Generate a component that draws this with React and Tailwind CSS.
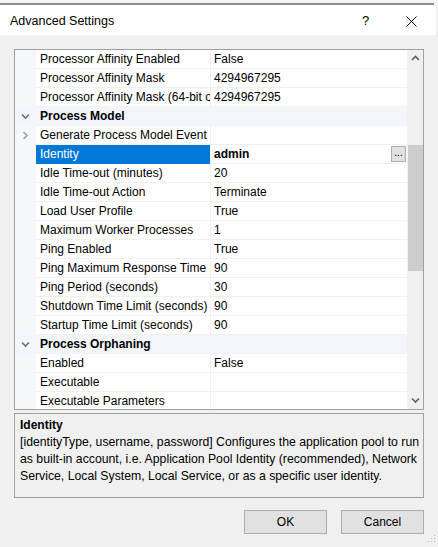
import React from "react";

const rows = [
  { name: "Processor Affinity Enabled", value: "False" },
  { name: "Processor Affinity Mask", value: "4294967295" },
  { name: "Processor Affinity Mask (64-bit option)", value: "4294967295" },
  { name: "Process Model", category: true },
  { name: "Generate Process Model Event Log Entry", value: "", expander: true },
  { name: "Identity", value: "admin", selected: true },
  { name: "Idle Time-out (minutes)", value: "20" },
  { name: "Idle Time-out Action", value: "Terminate" },
  { name: "Load User Profile", value: "True" },
  { name: "Maximum Worker Processes", value: "1" },
  { name: "Ping Enabled", value: "True" },
  { name: "Ping Maximum Response Time (seconds)", value: "90" },
  { name: "Ping Period (seconds)", value: "30" },
  { name: "Shutdown Time Limit (seconds)", value: "90" },
  { name: "Startup Time Limit (seconds)", value: "90" },
  { name: "Process Orphaning", category: true },
  { name: "Enabled", value: "False" },
  { name: "Executable", value: "" },
  { name: "Executable Parameters", value: "" },
];

const Chevron = ({ dir }) => {
  const d = dir === "down" ? "M1 2.5 L4.5 6 L8 2.5" : dir === "up" ? "M1 6 L4.5 2.5 L8 6" : "M2.5 1 L6 4.5 L2.5 8";
  return (
    <svg width="9" height="9" viewBox="0 0 9 9">
      <path d={d} fill="none" stroke="currentColor" strokeWidth="1.6" />
    </svg>
  );
};

const GridRow = ({ row }) => {
  if (row.category) {
    return (
      <div className="flex h-[19px] shrink-0 bg-[#f2f5fa]">
        <div className="w-[21px] flex items-center justify-center text-[#707070]">
          <Chevron dir="down" />
        </div>
        <div className="flex-1 pl-[4px] leading-[18px] font-bold border-b border-[#eef1f6]">{row.name}</div>
      </div>
    );
  }
  return (
    <div className="flex h-[19px] shrink-0">
      <div className="w-[21px] bg-[#f5f7fb] flex items-center justify-center text-[#a0a0a0]">
        {row.expander ? <Chevron dir="right" /> : null}
      </div>
      <div
        className={`w-[174px] pl-[4px] leading-[18px] whitespace-nowrap overflow-hidden border-b ${
          row.selected ? "bg-[#0078d7] text-white border-[#0078d7]" : "bg-white border-[#f0f0f0]"
        }`}
      >
        {row.name}
      </div>
      <div className="w-px bg-[#f0f0f0]" />
      <div className="flex-1 bg-white pl-[3px] leading-[18px] border-b border-[#f0f0f0] flex items-start">
        <span className={row.selected ? "font-bold flex-1" : "flex-1"}>{row.value}</span>
        {row.selected ? (
          <div className="w-[15px] h-[16px] mt-[1px] mr-[1px] border border-[#adadad] bg-[#e1e1e1] text-[10px] leading-[12px] text-center">
            ...
          </div>
        ) : null}
      </div>
    </div>
  );
};

export default function App() {
  return (
    <div className="w-[438px] h-[547px] bg-[#f0f0f0] font-['Segoe_UI','Liberation_Sans',sans-serif] text-[12px] text-black relative overflow-hidden">
      <div className="h-[3px] bg-[#f4f4f4]" />
      <div className="h-[2px] w-[434px] bg-[#8c8c8c]" />
      <div className="h-[30px] w-[436px] bg-white flex items-center pt-[2px]">
        <span className="pl-[10px] text-[12.5px] flex-1">Advanced Settings</span>
        <span className="w-[10px] text-[13px] mr-[34px]">?</span>
        <svg width="11" height="11" viewBox="0 0 11 11" className="mr-[19px]">
          <path d="M0.5 0.5 L10.5 10.5 M10.5 0.5 L0.5 10.5" stroke="#000" strokeWidth="1" />
        </svg>
      </div>
      <div className="px-[14px] pt-[14px]">
        <div className="w-[410px] h-[361px] border border-[#a0a0a0] flex bg-white overflow-hidden">
          <div className="w-[392px] flex flex-col overflow-hidden">
            {rows.map((row) => (
              <GridRow key={row.name} row={row} />
            ))}
          </div>
          <div className="w-[16px] bg-[#f0f0f0] flex flex-col items-center text-[#606060]">
            <div className="h-[17px] flex items-center justify-center">
              <Chevron dir="up" />
            </div>
            <div className="h-[78px]" />
            <div className="w-[15px] h-[126px] bg-[#cdcdcd]" />
            <div className="flex-1" />
            <div className="h-[17px] flex items-center justify-center">
              <Chevron dir="down" />
            </div>
          </div>
        </div>
        <div className="mt-[3px] w-[410px] h-[85px] border border-[#a0a0a0] px-[5px] pt-[3px]">
          <div className="font-bold leading-[17px]">Identity</div>
          <div className="leading-[17px] whitespace-nowrap text-[12.25px]">
            <div>[identityType, username, password] Configures the application pool to run</div>
            <div>as built-in account, i.e. Application Pool Identity (recommended), Network</div>
            <div>Service, Local System, Local Service, or as a specific user identity.</div>
          </div>
        </div>
        <div className="flex justify-end gap-[14px] mt-[12px] w-[410px]">
          <button className="w-[83px] h-[24px] bg-[#e1e1e1] border border-[#adadad] text-[12px]">OK</button>
          <button className="w-[83px] h-[24px] bg-[#e1e1e1] border border-[#adadad] text-[12px]">Cancel</button>
        </div>
      </div>
      <svg width="10" height="10" viewBox="0 0 10 10" className="absolute right-[2px] bottom-[2px]">
        <rect x="8" y="0" width="1" height="1" fill="#bbb" />
        <rect x="5" y="3" width="1" height="1" fill="#bbb" />
        <rect x="8" y="3" width="1" height="1" fill="#bbb" />
        <rect x="2" y="6" width="1" height="1" fill="#bbb" />
        <rect x="5" y="6" width="1" height="1" fill="#bbb" />
        <rect x="8" y="6" width="1" height="1" fill="#bbb" />
      </svg>
    </div>
  );
}
